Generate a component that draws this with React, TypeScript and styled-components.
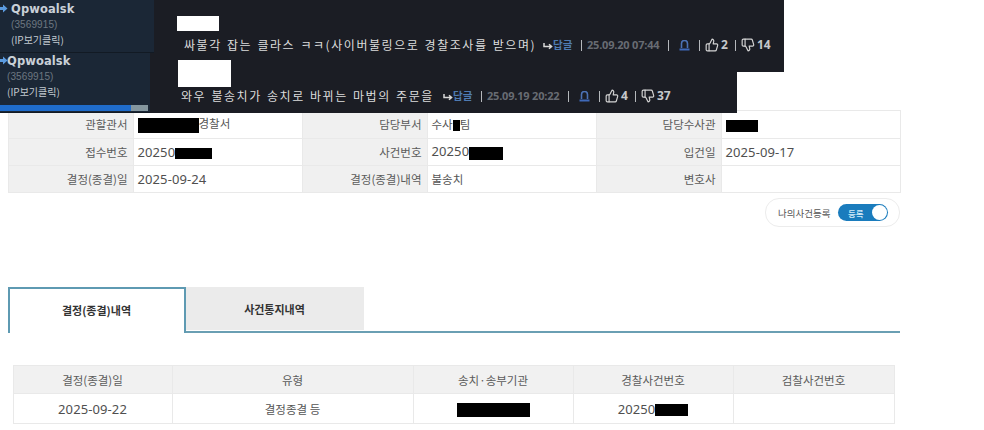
import React from "react";
import styled, { createGlobalStyle } from "styled-components";
import { ThumbsUp, ThumbsDown } from "lucide-react";

const Global = createGlobalStyle`
  html, body { margin: 0; padding: 0; background: #fff; }
  body { font-family: "Noto Sans CJK KR", "Noto Sans", sans-serif; width: 984px; height: 430px; overflow: hidden; }
`;

const Page = styled.div`
  position: relative;
  width: 984px;
  height: 430px;
  box-sizing: border-box;
  padding: 110px 84px 0 7.5px;
  display: flex;
  flex-direction: column;
  overflow: hidden;
`;

const Overlay = styled.div`
  position: absolute;
  left: 0;
  top: 0;
  display: flex;
  flex-direction: column;
  align-items: flex-start;
`;

const Comment = styled.div<{ $width: number; $height: number; $overlap?: number }>`
  display: flex;
  width: ${(p) => p.$width}px;
  height: ${(p) => p.$height}px;
  margin-top: ${(p) => -(p.$overlap ?? 0)}px;
  align-items: stretch;
`;

const Side = styled.div<{ $width: number; $height: number; $pad: number; $top: number }>`
  position: relative;
  flex: none;
  align-self: flex-start;
  box-sizing: border-box;
  width: ${(p) => p.$width}px;
  height: ${(p) => p.$height}px;
  padding: ${(p) => p.$top}px 0 0 ${(p) => p.$pad}px;
  background: #1b2736;
  border-bottom: 1px solid #121a24;
`;

const Name = styled.div`
  font: bold 11.5px/14px "DejaVu Sans", sans-serif;
  color: #c9d0d8;
  letter-spacing: 0.1px;
`;

const Uid = styled.div`
  font: 10px/14px "Liberation Sans", sans-serif;
  color: #6d7781;
  margin-top: 2px;
  letter-spacing: 0.1px;
`;

const IpLink = styled.div`
  font: 10px/14px "Noto Sans CJK KR", sans-serif;
  color: #c2c9d0;
  margin-top: 1px;
`;

const ArrowMark = styled.svg<{ $top: number }>`
  position: absolute;
  left: -1px;
  top: ${(p) => p.$top}px;
  width: 9px;
  height: 9px;
`;

const Progress = styled.div`
  position: absolute;
  left: 0;
  bottom: 1px;
  width: 148px;
  height: 6px;
  background: #83969f;
`;

const ProgressFill = styled.div`
  width: 131px;
  height: 100%;
  background: #1f6ccb;
`;

const Main = styled.div<{ $top: number; $left: number }>`
  flex: 1;
  box-sizing: border-box;
  background: #1b1d24;
  padding: ${(p) => p.$top}px 0 0 ${(p) => p.$left}px;
`;

const Blank = styled.div<{ $w: number; $h: number }>`
  width: ${(p) => p.$w}px;
  height: ${(p) => p.$h}px;
  background: #fff;
`;

const MetaRow = styled.div<{ $top: number; $left: number }>`
  display: flex;
  align-items: center;
  height: 18px;
  margin: ${(p) => p.$top}px 0 0 ${(p) => p.$left}px;
  white-space: nowrap;
`;

const Said = styled.span<{ $w: number }>`
  width: ${(p) => p.$w}px;
  flex: none;
  font: 12px/18px "Noto Sans CJK KR", sans-serif;
  color: #dcdcdc;
  letter-spacing: 1.55px;
  word-spacing: 1px;
  white-space: nowrap;
`;

const ReplyMark = styled.svg`
  width: 10px;
  height: 8px;
  flex: none;
  margin-top: 2px;
`;

const Reply = styled.span`
  font: bold 10.5px/18px "Noto Sans CJK KR", sans-serif;
  color: #4f7bb2;
  width: 21px;
  flex: none;
`;

const Sep = styled.i<{ $before: number; $after: number }>`
  display: block;
  flex: none;
  width: 1px;
  height: 11px;
  background: #b5b8bc;
  margin: 0 ${(p) => p.$after}px 0 ${(p) => p.$before}px;
`;

const Stamp = styled.span`
  font: bold 11px/18px "Open Sans", sans-serif;
  color: #686c73;
  width: 75px;
  flex: none;
  letter-spacing: -0.2px;
`;

const AlertMark = styled.svg`
  width: 11px;
  height: 11px;
  flex: none;
  margin: 0 5px;
`;

const Up = styled(ThumbsUp)`
  flex: none;
  color: #d4d4d4;
`;

const Down = styled(ThumbsDown)`
  flex: none;
  color: #d4d4d4;
  transform: scaleX(-1);
`;

const Count = styled.b`
  font: bold 12px/18px "Open Sans", sans-serif;
  color: #c6c8cb;
  margin-left: 2px;
`;

const Grid = styled.table`
  width: 892px;
  table-layout: fixed;
  border-collapse: collapse;
  flex: none;
`;

const Row = styled.tr<{ $h: number }>`
  height: ${(p) => p.$h}px;
`;

const LabelCell = styled.th`
  background: #f0f0f0;
  border: 1px solid #e9e9e9;
  font-size: 11.5px;
  font-weight: 400;
  color: #5b5b5b;
  text-align: right;
  padding: 0 5px 1px 0;
  line-height: 16px;
`;

const ValueCell = styled.td`
  background: #fff;
  border: 1px solid #e9e9e9;
  font-size: 11.5px;
  color: #555;
  padding: 0 4px 1px 4px;
  line-height: 16px;
  white-space: nowrap;
`;

const Num = styled.span`
  font: 13px/16px "Noto Sans", sans-serif;
  color: #4f4f4f;
  letter-spacing: 0.1px;
`;

const Redact = styled.span<{ $w: number; $h: number }>`
  display: inline-block;
  width: ${(p) => p.$w}px;
  height: ${(p) => p.$h}px;
  background: #000;
  vertical-align: middle;
`;

const ToggleRow = styled.div`
  display: flex;
  justify-content: flex-end;
  margin-top: 5px;
`;

const TogglePill = styled.div`
  display: flex;
  align-items: center;
  width: 135px;
  height: 29px;
  box-sizing: border-box;
  padding: 0 11px 0 12px;
  border: 1px solid #ececec;
  border-radius: 14px;
  justify-content: space-between;
  background: #fff;
`;

const ToggleLabel = styled.span`
  font-size: 9.5px;
  color: #555;
`;

const Switch = styled.div`
  display: flex;
  align-items: center;
  justify-content: space-between;
  box-sizing: border-box;
  width: 50px;
  height: 17px;
  border-radius: 9px;
  background: #1a7cbd;
  padding: 0 1px 0 10px;
`;

const SwitchText = styled.span`
  font-size: 8.5px;
  font-weight: 500;
  color: #d7ecf8;
`;

const Knob = styled.span`
  width: 15px;
  height: 15px;
  border-radius: 50%;
  background: #fff;
`;

const TabBar = styled.div`
  display: flex;
  align-items: flex-start;
  margin-top: 60px;
  height: 44px;
  border-bottom: 2px solid #6a9fb3;
`;

const Tab = styled.div<{ $active?: boolean }>`
  box-sizing: border-box;
  width: 178px;
  height: ${(p) => (p.$active ? 46 : 43)}px;
  padding-bottom: ${(p) => (p.$active ? 2 : 0)}px;
  display: flex;
  align-items: center;
  justify-content: center;
  font-size: 11px;
  font-weight: 700;
  color: #333;
  background: ${(p) => (p.$active ? "#fff" : "#ebebeb")};
  border: ${(p) => (p.$active ? "2px solid #5e9ab2" : "none")};
  border-bottom: none;
`;

const ListWrap = styled.div`
  margin: 32px 6px 0 5px;
`;

const ListGrid = styled(Grid)`
  width: 881px;
`;

const HeadCell = styled.th`
  background: #f1f1f1;
  border: 1px solid #e9e9e9;
  font-size: 11.5px;
  font-weight: 400;
  color: #5b5b5b;
  text-align: center;
  padding: 0;
`;

const BodyCell = styled.td`
  background: #fff;
  border: 1px solid #e9e9e9;
  font-size: 11.5px;
  color: #555;
  text-align: center;
  padding: 0;
`;

const Arrow = ({ top }: { top: number }) => (
  <ArrowMark $top={top} viewBox="0 0 9 9">
    <path d="M0 3h4V0.5L8.5 4.5 4 8.5V6H0z" fill="#5b9be0" />
  </ArrowMark>
);

const ReplyIcon = () => (
  <ReplyMark viewBox="0 0 10 8">
    <path d="M1 1v3.5h7M6 2.2 8.6 4.5 6 6.8" fill="none" stroke="#d8d8d8" strokeWidth="1.5" />
  </ReplyMark>
);

const AlertIcon = () => (
  <AlertMark viewBox="0 0 11 11">
    <path d="M2.5 8V3.5a3 3 0 0 1 6 0V8" fill="none" stroke="#4c72b5" strokeWidth="1.6" />
    <path d="M0.5 9.5h10" stroke="#3f69b8" strokeWidth="2" />
  </AlertMark>
);

const Meta = ({ date, up, down }: { date: string; up: number; down: number }) => (
  <>
    <ReplyIcon />
    <Reply>답글</Reply>
    <Sep $before={7} $after={5} />
    <Stamp>{date}</Stamp>
    <Sep $before={6} $after={5} />
    <AlertIcon />
    <Sep $before={4} $after={5} />
    <Up size={14} strokeWidth={2} />
    <Count>{up}</Count>
    <Sep $before={7} $after={5} />
    <Down size={14} strokeWidth={2} />
    <Count>{down}</Count>
  </>
);

export default function App() {
  return (
    <Page>
      <Global />
      <Grid>
        <colgroup>
          <col width={125} />
          <col width={169} />
          <col width={125} />
          <col width={169} />
          <col width={125} />
          <col width={179} />
        </colgroup>
        <tbody>
          <Row $h={28}>
            <LabelCell>관할관서</LabelCell>
            <ValueCell>
              <Redact $w={61} $h={15} />경찰서
            </ValueCell>
            <LabelCell>담당부서</LabelCell>
            <ValueCell>
              수사<Redact $w={7} $h={11} />팀
            </ValueCell>
            <LabelCell>담당수사관</LabelCell>
            <ValueCell>
              <Redact $w={32} $h={12} />
            </ValueCell>
          </Row>
          <Row $h={27}>
            <LabelCell>접수번호</LabelCell>
            <ValueCell>
              <Num>20250</Num>
              <Redact $w={37} $h={11} />
            </ValueCell>
            <LabelCell>사건번호</LabelCell>
            <ValueCell>
              <Num>20250</Num>
              <Redact $w={34} $h={13} />
            </ValueCell>
            <LabelCell>입건일</LabelCell>
            <ValueCell>
              <Num>2025-09-17</Num>
            </ValueCell>
          </Row>
          <Row $h={27}>
            <LabelCell>결정(종결)일</LabelCell>
            <ValueCell>
              <Num>2025-09-24</Num>
            </ValueCell>
            <LabelCell>결정(종결)내역</LabelCell>
            <ValueCell>불송치</ValueCell>
            <LabelCell>변호사</LabelCell>
            <ValueCell />
          </Row>
        </tbody>
      </Grid>
      <ToggleRow>
        <TogglePill>
          <ToggleLabel>나의사건등록</ToggleLabel>
          <Switch>
            <SwitchText>등록</SwitchText>
            <Knob />
          </Switch>
        </TogglePill>
      </ToggleRow>
      <TabBar>
        <Tab $active>결정(종결)내역</Tab>
        <Tab>사건통지내역</Tab>
      </TabBar>
      <ListWrap>
        <ListGrid>
          <colgroup>
            <col width={159} />
            <col width={241} />
            <col width={160} />
            <col width={160} />
            <col width={161} />
          </colgroup>
          <tbody>
            <Row $h={28}>
              <HeadCell>결정(종결)일</HeadCell>
              <HeadCell>유형</HeadCell>
              <HeadCell>송치·송부기관</HeadCell>
              <HeadCell>경찰사건번호</HeadCell>
              <HeadCell>검찰사건번호</HeadCell>
            </Row>
            <Row $h={30}>
              <BodyCell>
                <Num>2025-09-22</Num>
              </BodyCell>
              <BodyCell>결정종결 등</BodyCell>
              <BodyCell>
                <Redact $w={73} $h={14} />
              </BodyCell>
              <BodyCell>
                <Num>20250</Num>
                <Redact $w={33} $h={12} />
              </BodyCell>
              <BodyCell />
            </Row>
          </tbody>
        </ListGrid>
      </ListWrap>
      <Overlay>
        <Comment $width={784} $height={72}>
          <Side $width={154} $height={53} $pad={11} $top={2}>
            <Arrow top={4} />
            <Name>Qpwoalsk</Name>
            <Uid>(3569915)</Uid>
            <IpLink>(IP보기클릭)</IpLink>
          </Side>
          <Main $top={16} $left={23}>
            <Blank $w={42} $h={15} />
            <MetaRow $top={5} $left={7}>
              <Said $w={359}>싸불각 잡는 클라스 ㅋㅋ(사이버불링으로 경찰조사를 받으며)</Said>
              <Meta date="25.09.20 07:44" up={2} down={14} />
            </MetaRow>
          </Main>
        </Comment>
        <Comment $width={737} $height={60} $overlap={19}>
          <Side $width={150} $height={60} $pad={7} $top={1}>
            <Arrow top={3} />
            <Name>Qpwoalsk</Name>
            <Uid>(3569915)</Uid>
            <IpLink>(IP보기클릭)</IpLink>
            <Progress>
              <ProgressFill />
            </Progress>
          </Side>
          <Main $top={7} $left={28}>
            <Blank $w={53} $h={27} />
            <MetaRow $top={0} $left={3}>
              <Said $w={262}>와우 불송치가 송치로 바뀌는 마법의 주문을</Said>
              <Meta date="25.09.19 20:22" up={4} down={37} />
            </MetaRow>
          </Main>
        </Comment>
      </Overlay>
    </Page>
  );
}
